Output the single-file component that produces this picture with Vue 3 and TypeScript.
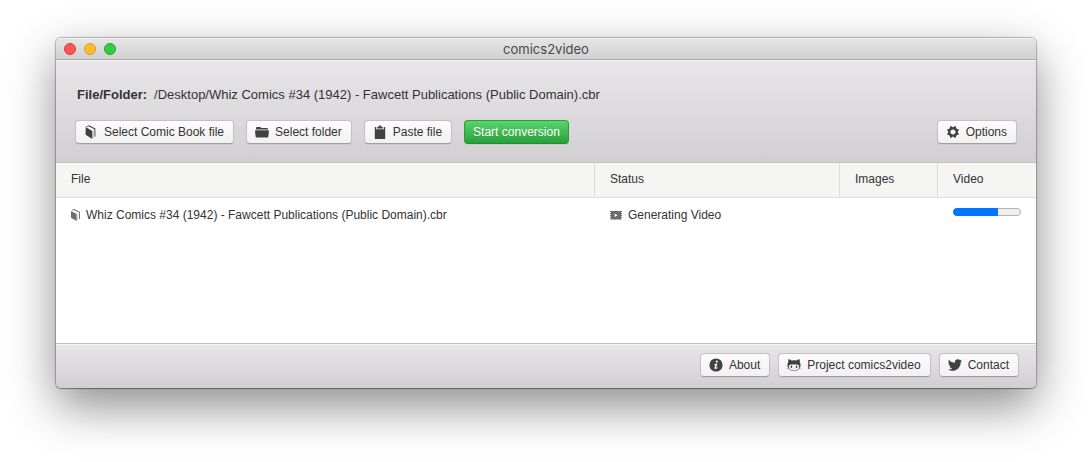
<script setup lang="ts">
import { ref } from 'vue'

interface Job {
  file: string
  status: string
  images: string
  progress: number
}

const title = 'comics2video'
const path = ref('/Desktop/Whiz Comics #34 (1942) - Fawcett Publications (Public Domain).cbr')
const jobs = ref<Job[]>([
  {
    file: 'Whiz Comics #34 (1942) - Fawcett Publications (Public Domain).cbr',
    status: 'Generating Video',
    images: '',
    progress: 66,
  },
])
</script>

<template>
  <div class="desktop">
    <div class="window">
      <header class="titlebar">
        <div class="lights">
          <button class="light close" type="button" aria-label="Close"></button>
          <button class="light minimize" type="button" aria-label="Minimize"></button>
          <button class="light zoom" type="button" aria-label="Zoom"></button>
        </div>
        <h1 class="title">{{ title }}</h1>
      </header>

      <section class="toolbar">
        <p class="path"><strong>File/Folder:</strong><span>{{ path }}</span></p>
        <div class="actions">
          <button class="btn" type="button">
            <svg class="icon" viewBox="0 0 14 14" aria-hidden="true">
              <path d="M1.6 2.1 8.3 5.9V13.9L1.6 9.8Z" />
              <path d="M2.1 1.4 5 .2 11.4 3.5V11.4L10.5 11.8V4.3L4.4 1.2 2.9 1.9Z" />
              <path d="M8.9 5.5 9.8 5.1V12.6L8.9 13Z" opacity=".3" />
            </svg>
            Select Comic Book file
          </button>
          <button class="btn" type="button">
            <svg class="icon" viewBox="0 0 14 14" aria-hidden="true">
              <path d="M1 4.6V3Q1 2 2 2H5Q5.6 2 6 2.5L6.6 3H12Q13 3 13 4V4.6Z" />
              <path d="M.6 5.3H13.4Q14 5.3 13.9 6L13.3 12Q13.2 12.6 12.6 12.6H1.4Q.8 12.6 .7 12L0 6Q0 5.3.6 5.3Z" />
            </svg>
            Select folder
          </button>
          <button class="btn" type="button">
            <svg class="icon" viewBox="0 0 14 14" aria-hidden="true">
              <path d="M2.4 2H3.3L3 4.3H11L10.7 2H11.6Q12.2 2 12.2 2.6V13.4Q12.2 14 11.6 14H2.4Q1.8 14 1.8 13.4V2.6Q1.8 2 2.4 2Z" />
              <path d="M4 3.5 4.5 1.7 6 1.4Q6.1.2 7 .2T8 1.4L9.5 1.7 10 3.5Z" />
            </svg>
            Paste file
          </button>
          <button class="btn positive" type="button">Start conversion</button>
          <button class="btn options" type="button">
            <svg class="icon" viewBox="0 0 20 20" aria-hidden="true">
              <path d="M16.783,10c0-1.049,0.646-1.875,1.617-2.443c-0.176-0.584-0.407-1.145-0.692-1.672c-1.089,0.285-1.97-0.141-2.711-0.883c-0.741-0.74-0.968-1.621-0.683-2.711c-0.527-0.285-1.088-0.518-1.672-0.691C12.074,2.57,11.047,3.215,10,3.215S7.927,2.57,7.357,1.6C6.773,1.773,6.213,2.006,5.686,2.291c0.285,1.09,0.059,1.971-0.684,2.711C4.262,5.744,3.381,6.17,2.291,5.885C2.006,6.412,1.774,6.973,1.6,7.557C2.57,8.125,3.216,8.951,3.216,10c0,1.047-0.646,2.074-1.616,2.643c0.174,0.584,0.406,1.145,0.691,1.672c1.09-0.285,1.971-0.059,2.711,0.682c0.742,0.742,0.969,1.623,0.684,2.711c0.527,0.287,1.087,0.518,1.671,0.693c0.57-0.971,1.596-1.617,2.643-1.617s2.074,0.646,2.643,1.617c0.584-0.176,1.145-0.406,1.672-0.693c-0.285-1.088-0.059-1.969,0.683-2.711c0.741-0.74,1.622-1.166,2.711-0.883c0.285-0.527,0.517-1.086,0.692-1.672C17.43,11.873,16.783,11.047,16.783,10z M10,13.652c-2.018,0-3.653-1.635-3.653-3.652c0-2.018,1.636-3.654,3.653-3.654s3.652,1.637,3.652,3.654C13.652,12.018,12.018,13.652,10,13.652z" />
            </svg>
            Options
          </button>
        </div>
      </section>

      <main class="content">
        <table class="jobs">
          <thead>
            <tr>
              <th class="file" scope="col">File</th>
              <th class="status" scope="col">Status</th>
              <th class="narrow" scope="col">Images</th>
              <th class="narrow" scope="col">Video</th>
            </tr>
          </thead>
          <tbody>
            <tr v-for="job in jobs" :key="job.file">
              <td>
                <div class="cell">
                  <svg class="small book" viewBox="0 0 10 12" aria-hidden="true">
                    <path d="M0 1.9 5.6 5V12L0 8.7Z" />
                    <path d="M.6 1.1 3.2.1 9 2.9V9.8L8.1 10.2V3.6L2.6 1 1.3 1.5Z" />
                    <path d="M6.3 4.6 7.2 4.2V10.9L6.3 11.3Z" opacity=".4" />
                  </svg>
                  {{ job.file }}
                </div>
              </td>
              <td>
                <div class="cell">
                  <svg class="small film" viewBox="0 0 12 12" aria-hidden="true">
                    <path fill-rule="evenodd" d="M0 2H12V3H11V4H12V5H11V6H12V7H11V8H12V9H11V10H12V10.5H0V10H1V9H0V8H1V7H0V6H1V5H0V4H1V3H0ZM4.7 4.4V8L7.6 6.2Z" />
                  </svg>
                  {{ job.status }}
                </div>
              </td>
              <td>{{ job.images }}</td>
              <td>
                <progress :value="job.progress" max="100" aria-label="Video progress"></progress>
              </td>
            </tr>
          </tbody>
        </table>
      </main>

      <footer class="footer">
        <button class="btn" type="button">
          <svg class="icon" viewBox="0 0 14 14" aria-hidden="true">
            <circle cx="7" cy="7" r="6.6" />
            <g class="mark">
              <circle cx="7.8" cy="3.6" r="1.1" />
              <path d="M5.2 6.1 8.4 5.5 7.3 9.5Q7.2 10.1 8.8 9.3L8.6 10Q7.3 11.1 6.2 11T5.5 9.6L6.3 6.7 5.1 6.8Z" />
            </g>
          </svg>
          About
        </button>
        <button class="btn" type="button">
          <svg class="icon" viewBox="0 0 14 14" aria-hidden="true">
            <path fill-rule="evenodd" d="M1.5 1.2Q3 1.2 4.6 2.5Q7 2 9.4 2.5Q11 1.2 12.5 1.2Q13 2.5 12.7 3.9Q13.7 5 13.5 7.2Q13.2 12.8 7 12.8T.5 7.2Q.3 5 1.3 3.9Q1 2.5 1.5 1.2ZM4.2 6.4Q1.7 6.3 1.7 9Q1.8 12.2 7 12.2T12.3 9Q12.3 6.3 9.8 6.4Q7 6.8 4.2 6.4Z" />
            <ellipse cx="4.4" cy="8.8" rx=".8" ry="1.3" />
            <ellipse cx="9.6" cy="8.8" rx=".8" ry="1.3" />
            <path d="M6.4 10.5H7.6L7 11Z" />
            <path class="whisker" d="M0 8.5 2 8.8M.2 10.6 2.2 9.9M14 8.5 12 8.8M13.8 10.6 11.8 9.9" />
          </svg>
          Project comics2video
        </button>
        <button class="btn" type="button">
          <svg class="icon" viewBox="1 1 18 18" aria-hidden="true">
            <path d="M17.316,6.246c0.008,0.162,0.011,0.326,0.011,0.488c0,4.99-3.797,10.742-10.74,10.742c-2.133,0-4.116-0.625-5.787-1.697c0.296,0.035,0.596,0.053,0.9,0.053c1.77,0,3.397-0.604,4.688-1.615c-1.651-0.031-3.046-1.121-3.526-2.621c0.23,0.043,0.467,0.066,0.71,0.066c0.345,0,0.679-0.045,0.995-0.131c-1.727-0.348-3.028-1.873-3.028-3.702c0-0.016,0-0.031,0-0.047c0.509,0.283,1.092,0.453,1.71,0.473c-1.013-0.678-1.68-1.832-1.68-3.143c0-0.691,0.186-1.34,0.512-1.898C3.942,5.498,6.725,7,9.862,7.158C9.798,6.881,9.765,6.594,9.765,6.297c0-2.084,1.689-3.773,3.774-3.773c1.086,0,2.067,0.457,2.755,1.191c0.859-0.17,1.668-0.484,2.397-0.916c-0.282,0.881-0.881,1.621-1.66,2.088c0.764-0.092,1.49-0.293,2.168-0.594C18.694,5.051,18.054,5.715,17.316,6.246z" />
          </svg>
          Contact
        </button>
      </footer>
    </div>
  </div>
</template>

<style>
body {
  margin: 0;
  background: #fff;
}
</style>

<style scoped>
.desktop {
  box-sizing: border-box;
  display: flex;
  min-height: 100vh;
  padding: 38px 56px 74px;
  overflow: hidden;
  font-family: "Liberation Sans", Arial, sans-serif;
  font-size: 12px;
  line-height: 16px;
  color: #333;
}

.window {
  flex: 1;
  min-width: 0;
  display: flex;
  flex-direction: column;
  overflow: hidden;
  border-radius: 5px;
  background: #fff;
  box-shadow:
    0 0 1px 1px rgba(0, 0, 0, 0.26),
    0 1px 1px rgba(0, 0, 0, 0.2),
    0 18px 48px rgba(0, 0, 0, 0.46);
}

.titlebar {
  box-sizing: border-box;
  display: grid;
  grid-template-columns: 1fr auto 1fr;
  align-items: center;
  height: 22px;
  padding: 0 8px;
  border-bottom: 1px solid #a9a9a9;
  box-shadow: inset 0 1px #f2f2f2;
  background: linear-gradient(#e6e6e6, #d1d1d1);
}

.lights {
  display: flex;
  gap: 8px;
}

.light {
  box-sizing: border-box;
  width: 12px;
  height: 12px;
  padding: 0;
  border: 1px solid;
  border-radius: 50%;
}

.close {
  border-color: #e2393c;
  background: #fc5555;
}

.minimize {
  border-color: #dd9c20;
  background: #fdbc30;
}

.zoom {
  border-color: #21a832;
  background: #35cb43;
}

.title {
  margin: 0;
  font-family: Inter, "Liberation Sans", sans-serif;
  font-size: 13px;
  font-weight: 400;
  line-height: 20px;
  color: #484848;
}

.toolbar {
  padding: 25px 19px 18px;
  border-bottom: 1px solid #c2c0c2;
  box-shadow: inset 0 1px #f5f4f5;
  background: linear-gradient(#e8e6e8, #d1cfd1);
}

.path {
  display: flex;
  gap: 7px;
  margin: 0 2px 15px;
  font-size: 13px;
  line-height: 20px;
}

.actions {
  display: flex;
  gap: 12px;
}

.options {
  margin-left: auto;
}

.btn {
  box-sizing: border-box;
  display: flex;
  align-items: center;
  gap: 6px;
  height: 24px;
  padding: 0 9px 0 8px;
  border: 1px solid;
  border-color: #c2c0c2 #c2c0c2 #a19fa1;
  border-radius: 4px;
  background: linear-gradient(#fcfcfc, #f1f1f1);
  box-shadow: 0 1px 1px rgba(0, 0, 0, 0.06);
  font: inherit;
  color: #333;
  white-space: nowrap;
}

.positive {
  padding: 0 8px;
  border-color: #29a03b #29a03b #248b34;
  background: linear-gradient(#5bd46d, #29a03b);
  color: #fff;
  text-shadow: 0 1px 1px rgba(0, 0, 0, 0.1);
}

.icon {
  width: 14px;
  height: 14px;
  fill: #414142;
}

.mark {
  fill: #f7f7f7;
}

.whisker {
  fill: none;
  stroke: #414142;
  stroke-width: 0.4;
}

.content {
  flex: 1;
}

.jobs {
  width: 100%;
  table-layout: fixed;
  border-collapse: separate;
  border-spacing: 0;
  text-align: left;
}

.jobs th {
  box-sizing: border-box;
  height: 35px;
  padding: 0 15px 2px;
  border-right: 1px solid #ddd;
  border-bottom: 1px solid #ddd;
  background: #f5f5f4;
  font-weight: 400;
}

.jobs th:last-child {
  border-right: 0;
}

.file {
  width: 55%;
}

.status {
  width: 25%;
}

.narrow {
  width: 10%;
}

.jobs td {
  padding: 9px 15px;
  vertical-align: top;
}

.cell {
  display: flex;
  align-items: center;
}

.small {
  flex: none;
  height: 12px;
  fill: #6b6b6b;
}

.book {
  width: 10px;
  margin-right: 5px;
}

.film {
  width: 12px;
  margin-right: 6px;
}

progress {
  display: block;
  width: 100%;
  height: 8px;
  margin-top: 1px;
  overflow: hidden;
  appearance: none;
  border: 0;
  border-radius: 4px;
}

progress::-webkit-progress-bar {
  border-radius: 4px;
  background: #efefef;
  box-shadow: inset 0 0 0 1px #b2b2b2;
}

progress::-webkit-progress-value {
  border-radius: 4px 0 0 4px;
  background: #0275ff;
}

.footer {
  display: flex;
  justify-content: flex-end;
  gap: 8px;
  padding: 9px 17px 11px;
  border-top: 1px solid #c2c0c2;
  box-shadow: inset 0 1px #f5f4f5;
  background: linear-gradient(#e8e6e8, #d1cfd1);
}
</style>
